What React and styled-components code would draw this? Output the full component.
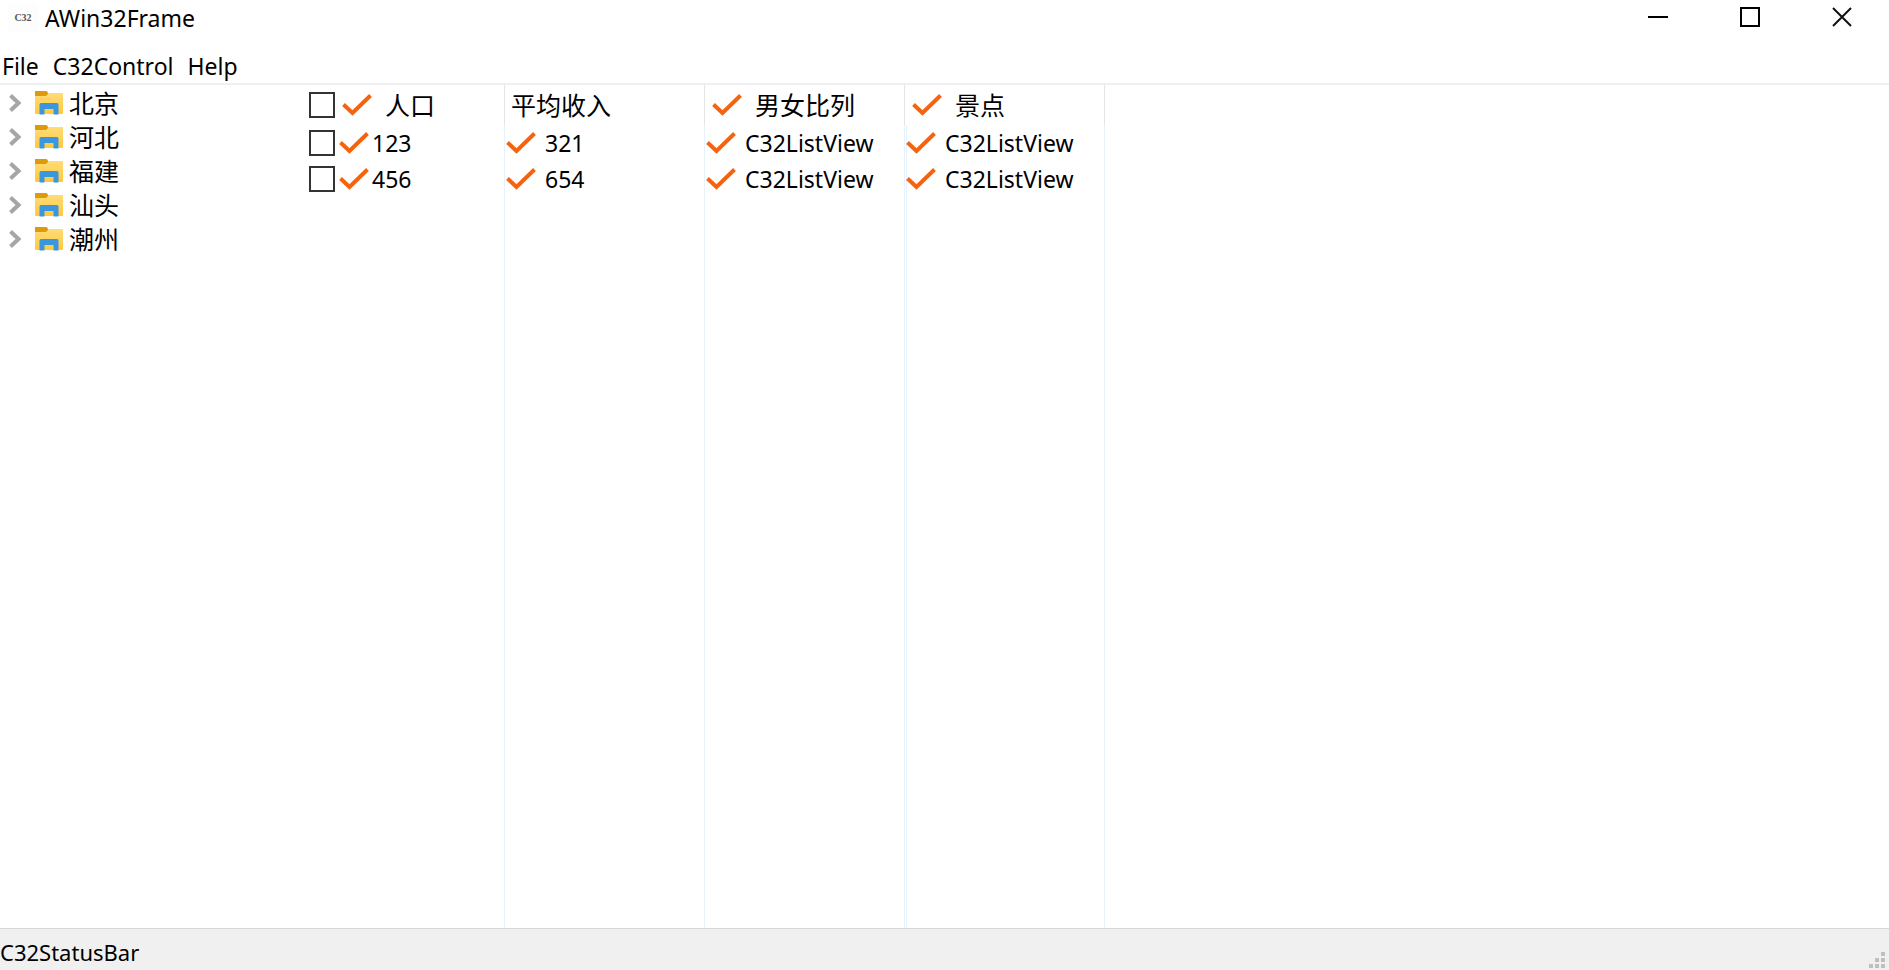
import React from "react";
import styled, { createGlobalStyle } from "styled-components";

const Global = createGlobalStyle`
  *, *::before, *::after { box-sizing: border-box; }
  body { margin: 0; background: #fff; }
  button, input { font: inherit; color: inherit; margin: 0; }
`;

const Window = styled.div`
  display: flex;
  flex-direction: column;
  min-height: 100vh;
  background: #fff;
  color: #000;
  font: 23px/32px "Noto Sans", "Noto Sans CJK SC", sans-serif;
`;

const TitleBar = styled.header`
  display: flex;
  align-items: flex-start;
  height: 48px;
  padding: 0 1px 0 8px;
`;

const AppIcon = styled.div`
  width: 30px;
  height: 30px;
  margin-top: 3px;
  background: #fdfdfd;
  color: #555;
  font: bold 10px/30px "Liberation Serif", serif;
  text-align: center;
`;

const Title = styled.h1`
  flex: 1;
  margin: 2px 0 0 7px;
  font-size: 23px;
  font-weight: 400;
  line-height: 32px;
`;

const WindowButton = styled.button`
  display: flex;
  align-items: center;
  justify-content: center;
  width: 92px;
  height: 34px;
  padding: 0;
  border: 0;
  background: none;
`;

const MenuBar = styled.nav`
  display: flex;
  height: 37px;
  border-bottom: 2px solid #f0f0f0;
`;

const MenuButton = styled.button`
  padding: 0 12px 0 2px;
  border: 0;
  background: none;
  line-height: 36px;
`;

const Main = styled.main`
  display: flex;
  flex: 1;
`;

const Tree = styled.ul`
  width: 305px;
  margin: 0;
  padding: 1px 0 0;
  list-style: none;
`;

const TreeItem = styled.li`
  display: flex;
  align-items: center;
  height: 34px;
  font-size: 25px;
`;

const Expander = styled.button`
  display: flex;
  width: 35px;
  padding: 0 0 0 9px;
  border: 0;
  background: none;
`;

const TreeLabel = styled.span`
  margin-left: 6px;
`;

const ListView = styled.table`
  width: 800px;
  border-collapse: separate;
  border-spacing: 0;
  table-layout: fixed;
`;

const HeadCell = styled.th`
  height: 40px;
  padding: 0 0 0 ${(p) => (p.$first ? 4 : p.$plain ? 6 : 7)}px;
  border-right: 1px solid #e5e5e5;
  font-size: 25px;
  font-weight: 400;
  text-align: left;
`;

const Cell = styled.td`
  height: 36px;
  padding: 0 0 0 ${(p) => (p.$first ? 4 : 1)}px;
  border-right: 1px solid #e8f2fe;
  background: ${(p) =>
    p.$last
      ? "linear-gradient(to right, transparent 1px, #e8f2fe 1px, #e8f2fe 2px, transparent 2px)"
      : "none"};
`;

const FillCell = styled(Cell)`
  height: auto;
`;

const Line = styled.div`
  display: flex;
  align-items: center;
  line-height: 36px;
`;

const Label = styled.span`
  margin-left: ${(p) => p.$gap}px;
`;

const Check = styled.input`
  appearance: none;
  width: 26px;
  height: 26px;
  margin-right: ${(p) => p.$gap}px;
  border: 2px solid #333;
  background: #fff;
`;

const StatusBar = styled.footer`
  display: flex;
  align-items: flex-end;
  justify-content: space-between;
  height: 42px;
  border-top: 1px solid #d7d7d7;
  background: #f0f0f0;
`;

const StatusText = styled.span`
  margin-bottom: 2px;
  font-size: 22px;
`;

const Folder = () => (
  <svg width="28" height="24" viewBox="0 0 28 24" aria-hidden="true">
    <defs>
      <linearGradient id="folder" x1="0" y1="0" x2="0" y2="1">
        <stop offset="0" stopColor="#ffdc78" />
        <stop offset="1" stopColor="#ffc83d" />
      </linearGradient>
    </defs>
    <path d="M0 2h28v20q0 1-1 1H1q-1 0-1-1z" fill="url(#folder)" />
    <path d="M0 0h11.500l1.500 1.500v1.500L11 5H0z" fill="#dd9a0c" />
    <path d="M4.500 23.500V13.500q0-1.500 1.500-1.500h16q1.500 0 1.500 1.500v10h-5V18h-9v5.500z" fill="#3a96dd" />
  </svg>
);

const Tick = () => (
  <svg width="30" height="22" viewBox="0 0 30 22" aria-hidden="true">
    <path d="M1.500 10.500l9 8.500L28.500 1.500" fill="none" stroke="#f7630c" strokeWidth="4" />
  </svg>
);

const places = ["北京", "河北", "福建", "汕头", "潮州"];
const rows = [
  ["123", "321", "C32ListView", "C32ListView"],
  ["456", "654", "C32ListView", "C32ListView"],
];
const columns = ["人口", "平均收入", "男女比列", "景点"];

export default function App() {
  return (
    <Window>
      <Global />
      <TitleBar>
        <AppIcon>C32</AppIcon>
        <Title>AWin32Frame</Title>
        <WindowButton aria-label="Minimize">
          <svg width="20" height="20"><path d="M0 10h20" stroke="#000" strokeWidth="2" /></svg>
        </WindowButton>
        <WindowButton aria-label="Maximize">
          <svg width="20" height="20"><path d="M1 1h18v18H1z" fill="none" stroke="#000" strokeWidth="2" /></svg>
        </WindowButton>
        <WindowButton aria-label="Close">
          <svg width="20" height="20"><path d="M1 1l18 18M19 1L1 19" stroke="#111" strokeWidth="2" /></svg>
        </WindowButton>
      </TitleBar>
      <MenuBar>
        {["File", "C32Control", "Help"].map((m) => <MenuButton key={m}>{m}</MenuButton>)}
      </MenuBar>
      <Main>
        <Tree>
          {places.map((p) => (
            <TreeItem key={p}>
              <Expander aria-label={"Expand " + p}>
                <svg width="12" height="18"><path d="M1.500 1.500L9.500 9l-8 7.500" fill="none" stroke="#a6a6a6" strokeWidth="4" /></svg>
              </Expander>
              <Folder />
              <TreeLabel>{p}</TreeLabel>
            </TreeItem>
          ))}
        </Tree>
        <ListView>
          <thead>
            <tr>
              {columns.map((c, i) => (
                <HeadCell key={c} $first={i === 0} $plain={i === 1}>
                  <Line>
                    {i === 0 && <Check type="checkbox" aria-label="Select all" $gap={7} />}
                    {i !== 1 && <Tick />}
                    <Label $gap={i === 1 ? 0 : 13}>{c}</Label>
                  </Line>
                </HeadCell>
              ))}
            </tr>
          </thead>
          <tbody>
            {rows.map((r) => (
              <tr key={r[0]}>
                {r.map((t, i) => (
                  <Cell key={i} $first={i === 0} $last={i === 3}>
                    <Line>
                      {i === 0 && <Check type="checkbox" aria-label={"Select " + t} $gap={4} />}
                      <Tick />
                      <Label $gap={i === 0 ? 3 : 9}>{t}</Label>
                    </Line>
                  </Cell>
                ))}
              </tr>
            ))}
            <tr>
              {columns.map((c, i) => <FillCell key={c} $last={i === 3} />)}
            </tr>
          </tbody>
        </ListView>
      </Main>
      <StatusBar>
        <StatusText>C32StatusBar</StatusText>
        <svg width="20" height="18" aria-hidden="true">
          <path d="M12 0h4v4h-4zM6 6h4v4H6zM12 6h4v4h-4zM0 12h4v4H0zM6 12h4v4H6zM12 12h4v4h-4z" fill="#bfbfbf" />
        </svg>
      </StatusBar>
    </Window>
  );
}
